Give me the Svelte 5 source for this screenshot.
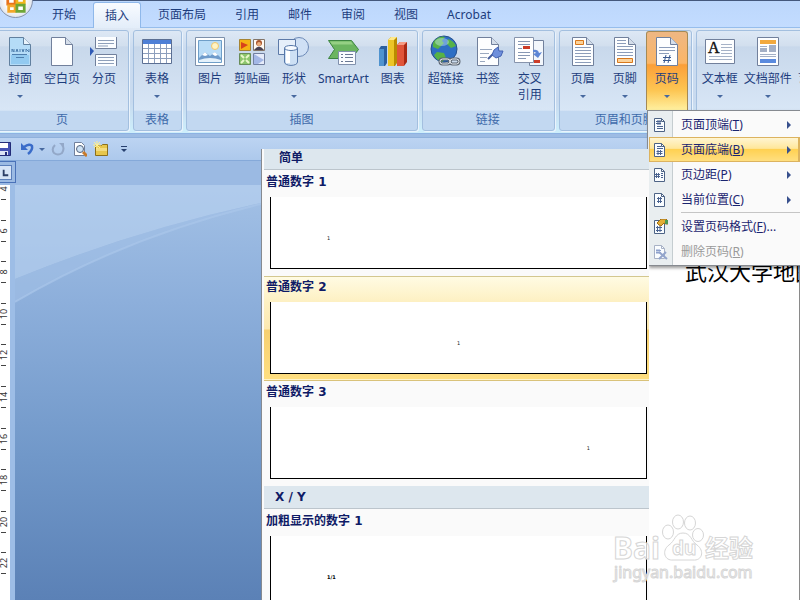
<script>
  const tabs = ['开始', '插入', '页面布局', '引用', '邮件', '审阅', '视图', 'Acrobat'];
  const groups = [
    { name: '页', items: [
      { label: ['封面'], icon: 'cover', drop: true },
      { label: ['空白页'], icon: 'blank' },
      { label: ['分页'], icon: 'break' }
    ] },
    { name: '表格', items: [{ label: ['表格'], icon: 'table', drop: true }] },
    { name: '插图', items: [
      { label: ['图片'], icon: 'picture' },
      { label: ['剪贴画'], icon: 'clipart' },
      { label: ['形状'], icon: 'shapes', drop: true },
      { label: ['SmartArt'], icon: 'smartart' },
      { label: ['图表'], icon: 'chart' }
    ] },
    { name: '链接', items: [
      { label: ['超链接'], icon: 'globe' },
      { label: ['书签'], icon: 'bookmark' },
      { label: ['交叉', '引用'], icon: 'xref' }
    ] },
    { name: '页眉和页脚', items: [
      { label: ['页眉'], icon: 'header', drop: true },
      { label: ['页脚'], icon: 'footer', drop: true },
      { label: ['页码'], icon: 'number', drop: true, open: true }
    ] },
    { name: '', wide: true, items: [
      { label: ['文本框'], icon: 'textbox', drop: true },
      { label: ['文档部件'], icon: 'parts', drop: true },
      { label: ['艺术字'], icon: 'none', drop: true }
    ] }
  ];
  const menu = [
    { text: '页面顶端', key: 'T', icon: 'top', sub: true },
    { text: '页面底端', key: 'B', icon: 'bottom', sub: true, on: true },
    { text: '页边距', key: 'P', icon: 'margin', sub: true },
    { text: '当前位置', key: 'C', icon: 'here', sub: true },
    { text: '设置页码格式', key: 'F', icon: 'format', tail: '...', sep: true },
    { text: '删除页码', key: 'R', icon: 'remove', off: true }
  ];
  const gallery = [
    { title: '简单', indent: true, items: [
      { name: '普通数字 1', align: 'left', mark: '1' },
      { name: '普通数字 2', align: 'center', mark: '1', on: true },
      { name: '普通数字 3', align: 'right', mark: '1' }
    ] },
    { title: 'X / Y', items: [{ name: '加粗显示的数字 1', align: 'left', mark: '1/1', bold: true }] }
  ];
  const marks = [4, 6, 8, 10, 12, 14, 16, 18, 20, 22].map((n, i) => ({ n, y: Math.round(4 + i * 41.6) }));
</script>

{#snippet sheet()}
  <path d="M5.500 2.500h14l7 7v21h-21z" fill="#fdfeff" stroke="#71809c" />
  <path d="M19.500 2.500v7h7" fill="#d5deea" stroke="#71809c" />
{/snippet}

{#snippet icon(name)}
  <svg class="icon" viewBox="0 0 32 32" aria-hidden="true">
    {#if name === 'cover'}
      <path d="M5.500 2.500h14l7 7v21h-21z" fill="#b5dcf7" stroke="#61809f" />
      <path d="M7 20h18v9H7z" fill="#93caf0" />
      <path d="M19.500 2.500v7h7" fill="#e9f3fb" stroke="#61809f" />
      <path d="M8 17v-3l2 3v-3m2 3l1-3 1 3m2-3v3m2-3l1 3 1-3m2 3v-3l3 3v-3M8 19.500h15M12 22.500h8" stroke="#4f7fae" fill="none" />
    {:else if name === 'blank'}
      {@render sheet()}
    {:else if name === 'break'}
      <path d="M7.500 2v11.500h21V2M7.500 31V19.500h21V31" fill="#fbfdff" stroke="#71809c" />
      <path d="M10 5.500h16M10 8.500h16M10 11h10M10 22.500h16M10 25.500h16M10 28.500h16" stroke="#8fa0ba" />
      <path d="M2 12l4 4-4 5z" fill="#2f5ab5" />
    {:else if name === 'table'}
      <path d="M1.500 4.500h29v24h-29z" fill="#fff" stroke="#5b6f93" />
      <path d="M2 5h28v4H2z" fill="#4d7fd6" />
      <path d="M2 13.500h28M2 18.500h28M2 23.500h28M7.500 9v19M13.500 9v19M19.500 9v19M25.500 9v19" stroke="#8d9fbd" />
    {:else if name === 'picture'}
      <path d="M1.500 2.500h29v28h-29z" fill="#fff" stroke="#7d90ab" />
      <path d="M4.500 5.500h23v22h-23z" fill="#b9dcf7" stroke="#6e9ec8" />
      <circle cx="21" cy="11" r="3.500" fill="#fff3c4" stroke="#efc66c" />
      <path d="M5 23l6-6 5 4 5-4 6 6v4H5z" fill="#6f9bcb" />
      <path d="M8 20l3-3 3 3-3 1zm10-1l3-2 3 3-3 1z" fill="#fff" />
      <path d="M5 25q11-4 22 0v2H5z" fill="#e4f1fb" />
    {:else if name === 'clipart'}
      <path d="M3.500 4.500h11v11h-11z" fill="#f6b414" stroke="#a68433" />
      <path d="M5 7l7 3-7 4z" fill="#d8431b" />
      <path d="M17.500 4.500h11v11h-11z" fill="#fffaf3" stroke="#827468" />
      <circle cx="23" cy="8" r="3" fill="#a7542d" /><path d="M18 15q5-7 10 0z" fill="#494253" /><circle cx="23" cy="9" r="2" fill="#edb07e" />
      <path d="M3.500 18.500h11v11h-11z" fill="#8cc56c" stroke="#688c59" />
      <path d="M5 20l3 3m5-3l-3 3m-5 5l3-3m5 3l-3-3" stroke="#e8f7c9" stroke-width="2" />
      <path d="M17.500 18.500h11v11h-11z" fill="#e6ecfa" stroke="#7280a0" />
      <path d="M18 19l10 6-6 4h-4z" fill="#a3b7e6" />
    {:else if name === 'shapes'}
      <circle cx="21" cy="12" r="9.500" fill="#cfe0f5" stroke="#6d8ab7" />
      <path d="M0.500 4.500h17v15h-17z" fill="#e6effa" stroke="#5d7aa8" />
      <path d="M6.500 13v14c0 4.500 13 4.500 13 0V13" fill="#cde0f5" stroke="#5778aa" />
      <path d="M8 15h4v13H8z" fill="#fff" />
      <ellipse cx="13" cy="13" rx="6.500" ry="2.500" fill="#f6faff" stroke="#5778aa" />
    {:else if name === 'smartart'}
      <path d="M1.500 5.500h23l7 9-7 9h-23l6-9z" fill="#6bb560" stroke="#3c8541" />
      <path d="M3 6.500h21l2 3H5z" fill="#95d084" />
      <path d="M11.500 16.500h17v13h-17z" fill="#fafcff" stroke="#8090ac" />
      <path d="M14 19.500h2M14 22.500h2M14 26.500h2M18 19.500h8M18 22.500h8M18 26.500h8" stroke="#6a7994" />
    {:else if name === 'chart'}
      <path d="M2 14l2-3h6v17l-2 3H2z" fill="#2b5f9f" /><path d="M2 14h5v17H2z" fill="#4f93cf" />
      <path d="M11 5l3-3h6v26l-2 3h-7z" fill="#b98c00" /><path d="M11 5h6v26h-6z" fill="#ecc527" /><path d="M11 5l3-3h6l-3 3z" fill="#ffe98a" />
      <path d="M20 10l3-3h7v20l-3 4h-7z" fill="#a92914" /><path d="M20 10h7v21h-7z" fill="#e0553a" /><path d="M20 10l3-3h7l-3 3z" fill="#f59b83" />
    {:else if name === 'globe'}
      <circle cx="14" cy="14" r="13" fill="#2e6fc4" stroke="#264f8b" />
      <path d="M5 5q5-5 10-3l-3 4 2 2-6 6-5-2q-1-4 2-7zM18 4q6 2 8 7l-5 2-4-4zM7 17l7 1 2 5-4 4q-6-2-8-7z" fill="#57b246" />
      <ellipse cx="12" cy="7" rx="7" ry="4" fill="#d5efff" opacity=".4" />
      <rect x="10" y="24" width="10" height="5" rx="2.500" fill="none" stroke="#5b6470" stroke-width="3" />
      <rect x="20" y="24" width="9" height="5" rx="2.500" fill="none" stroke="#5b6470" stroke-width="3" />
      <rect x="10" y="24" width="10" height="5" rx="2.500" fill="none" stroke="#eef2f6" />
      <rect x="20" y="24" width="9" height="5" rx="2.500" fill="none" stroke="#eef2f6" />
    {:else if name === 'bookmark'}
      {@render sheet()}
      <path d="M8 14.500h12M8 18.500h9M8 22.500h7M8 26.500h5" stroke="#9aa9c0" />
      <path d="M16 24l6-6" stroke="#445d9e" stroke-width="2" />
      <path d="M20 20l2-5 4-3 1 4h4l-2 5-5 2z" fill="#6e8fdc" stroke="#4463b3" />
    {:else if name === 'xref'}
      <path d="M15.500 5.500h14v25h-14z" fill="#f3f7fc" stroke="#71809c" />
      <path d="M0.500 2.500h19v25h-19z" fill="#fff" stroke="#8794ac" />
      <path d="M4 6.500h12M4 9.500h12M4 13.500h4M4 17.500h12M4 20.500h12M4 23.500h8" stroke="#8898b4" />
      <path d="M9 11h7v3H9zM20 25h6v3h-6z" fill="#cc3d2a" />
      <path d="M19 15q5-1 6 3l3-1-4 6-5-4 3-1q0-1-3-1z" fill="#5d86d6" />
    {:else if name === 'header'}
      {@render sheet()}
      <path d="M8.500 5.500h8v4h-8z" fill="#fbd29a" stroke="#d9781b" />
      <path d="M8 12.500h16M8 15.500h16M8 18.500h16M8 21.500h16M8 24.500h16M8 27.500h16" stroke="#8c9dba" />
    {:else if name === 'footer'}
      {@render sheet()}
      <path d="M8 5.500h9M8 8.500h9M8 11.500h16M8 14.500h16M8 17.500h16M8 20.500h16" stroke="#8c9dba" />
      <path d="M8.500 23.500h15v4h-15z" fill="#fbd29a" stroke="#d9781b" />
    {:else if name === 'number'}
      {@render sheet()}
      <path d="M8 12.500h16M8 15.500h16M8 18.500h10" stroke="#8c9dba" />
      <path d="M15 20l-2 8M19 20l-2 8M12 22.500h8M12 25.500h8" stroke="#38588f" />
    {:else if name === 'textbox'}
      <path d="M1.500 4.500h29v24h-29z" fill="#fdfeff" stroke="#71809c" />
      <path d="M17 9.500h11M17 12.500h11M17 15.500h11M17 18.500h11M5 21.500h23M5 24.500h23" stroke="#a5b2c7" />
      <text x="4" y="18" font-family="Liberation Serif, serif" font-size="16" fill="#111" stroke="#111" stroke-width=".4">A</text>
    {:else if name === 'parts'}
      <path d="M5.500 2.500h21v28h-21z" fill="#fdfeff" stroke="#71809c" />
      <path d="M8 5h16v4H8z" fill="#f2a93e" />
      <path d="M8 13h7v4H8zM17 10h7v7h-7z" fill="#a4b0c6" />
      <path d="M8 11.500h7M8 19.500h16M8 21.500h16" stroke="#a4b0c6" />
      <path d="M8 24h16v4H8z" fill="#5a8ade" />
    {/if}
  </svg>
{/snippet}

{#snippet menuIcon(name)}
  <svg class="micon" viewBox="0 0 16 16" aria-hidden="true">
    <path d="M2.500 1.500h7l3 3v10h-10z" fill="#fafdff" stroke={name === 'remove' ? '#a8b2c6' : '#4d6385'} />
    <path d="M9.500 1.500v3h3" fill="none" stroke={name === 'remove' ? '#a8b2c6' : '#4d6385'} />
    {#if name === 'top'}
      <path d="M6 3v5M8 3v5M4 4.500h5M4 6.500h5M5 9.500h6M5 11.500h6" stroke="#4a6390" />
    {:else if name === 'bottom'}
      <path d="M6 8v5M8.500 8v5M4.500 9.500h6M4.500 11.500h6M5 4.500h4M5 6.500h6" stroke="#4a6390" />
    {:else if name === 'margin'}
      <path d="M4.500 6v5M6.500 6v5M3 7.500h5M3 9.500h5M9 6.500h2M9 8.500h2M9 10.500h2" stroke="#4a6390" />
    {:else if name === 'here'}
      <path d="M6.500 5v6M8.500 5v6M5 6.500h5M5 9.500h5" stroke="#4a6390" />
    {:else if name === 'format'}
      <path d="M5.500 7v6M8 7v6M4 8.500h6M4 11.500h6" stroke="#4a6390" />
      <path d="M5 4l4-4h5l2 2v3h-2l-2-1-3 3-2-1z" fill="#e3ae36" stroke="#a06d13" />
      <path d="M13 1h3v4h-3z" fill="#4e9a53" />
    {:else}
      <path d="M5 5v5M7 5v5M4 6.500h5M4 8.500h5" stroke="#8ca0cc" />
      <path d="M7 8l8 7M14 8l-7 7" stroke="#93a5cc" stroke-width="2" />
    {/if}
  </svg>
{/snippet}

<div class="app">
  <nav class="tabs">
    {#each tabs as t, i}
      <button class="tab" class:active={i === 1}>{t}</button>
    {/each}
    <button class="office" aria-label="Office">
      <svg viewBox="0 0 24 24" aria-hidden="true">
        <path d="M3 4h8v7H3z" fill="#fff" stroke="#e8731d" stroke-width="3" />
        <path d="M13 2h8v8h-8z" fill="#fff" stroke="#f1b51c" stroke-width="3" />
        <path d="M4 13h7v6H4z" fill="#fff" stroke="#f3a72a" stroke-width="3" />
        <path d="M13 12h8v7h-8z" fill="#fff" stroke="#6ea636" stroke-width="3" />
      </svg>
    </button>
  </nav>

  <div class="ribbon">
    {#each groups as g}
      <section class="group" class:wide={g.wide}>
        <div class="tools">
          {#each g.items as it}
            <button class="tool" class:open={it.open}>
              {@render icon(it.icon)}
              {#each it.label as line}<span>{line}</span>{/each}
              {#if it.drop}<i class="down"></i>{/if}
            </button>
          {/each}
        </div>
        <h2>{g.name}</h2>
      </section>
    {/each}
  </div>

  <div class="quick">
    <button class="save" aria-label="保存">
      <svg viewBox="0 0 16 16"><path d="M1.500 1.500h13v13h-13z" fill="#4451b2" stroke="#232c78" /><path d="M4 2h8v5H4z" fill="#fff" /><path d="M4 10h8v4H4z" fill="#dce4f5" /><path d="M9 11h2v3H9z" fill="#232c78" /></svg>
    </button>
    <button aria-label="撤消">
      <svg viewBox="0 0 16 16"><path d="M3 6q6-4 8-1 1 4-4 8" fill="none" stroke="#3a6cc9" stroke-width="2.500" /><path d="M0 2v7h7z" fill="#3a6cc9" /></svg>
    </button>
    <i class="down"></i>
    <button aria-label="重复">
      <svg viewBox="0 0 16 16"><path d="M5 4q-4 4-1 8 4 3 8 0 3-5 0-8" fill="none" stroke="#93a8c8" stroke-width="2" /><path d="M9 2h5v5z" fill="#93a8c8" /></svg>
    </button>
    <button aria-label="打印预览">
      <svg viewBox="0 0 16 16"><path d="M3.500 1.500h7l3 3v10h-10z" fill="#fff" stroke="#71809c" /><circle cx="9" cy="8" r="3.500" fill="#cfe3f5" stroke="#52627d" /><path d="M12 11l4 4" stroke="#c77a2b" stroke-width="3" /></svg>
    </button>
    <button aria-label="打开">
      <svg viewBox="0 0 16 16"><path d="M3.500 4.500h6l1-1h5v11h-12z" fill="#e7c64b" stroke="#8b6f1b" /><path d="M4 7h11v3H4z" fill="#f3dc80" /><path d="M5 0v8M1 4h8M2 1l6 6M8 1L2 7" stroke="#ffef8f" /></svg>
    </button>
    <button class="more" aria-label="自定义快速访问工具栏"><i class="down"></i></button>
  </div>

  <div class="rulerbar">
    <button class="corner" aria-label="制表符"><svg viewBox="0 0 12 14"><path d="M4 4v6h5" fill="none" stroke="#2a3d66" stroke-width="2" /></svg></button>
  </div>

  <main class="work">
    <div class="ruler">
      <svg width="10" height="440">
        {#each marks as m}
          <text transform="translate(7 {m.y}) rotate(-90)" text-anchor="middle" font-size="9" fill="#333">{m.n}</text>
          <path d="M1 {m.y - 10.5}h5M1 {m.y + 10.5}h5" stroke="#444" />
        {/each}
      </svg>
    </div>
    <div class="desk">
      <svg class="swoosh" viewBox="0 0 246 120" aria-hidden="true">
        <path d="M0 0H246V18Q120 45 0 94z" fill="#b9d2f0" opacity=".6" />
        <path d="M0 94Q120 45 246 18V19Q110 52 0 117z" fill="#a2c0e6" opacity=".6" />
        <path d="M0 117Q110 52 246 19" fill="none" stroke="#a9c6ea" stroke-width="2" opacity=".7" />
      </svg>
      <article class="page"><p>武汉大学地图</p></article>
    </div>
  </main>

  <div class="menu" role="menu">
    {#each menu as m}
      {#if m.sep}<hr />{/if}
      <button class="row" class:on={m.on} disabled={m.off} role="menuitem">
        <span class="slot">{@render menuIcon(m.icon)}</span>
        <span class="text">{m.text}(<u>{m.key}</u>){m.tail ?? ''}</span>
        {#if m.sub}<i class="right"></i>{/if}
      </button>
    {/each}
  </div>

  <div class="gallery">
    <div class="scroll">
      {#each gallery as s}
        <h3 class:indent={s.indent}>{s.title}</h3>
        {#each s.items as it}
          <button class="choice" class:on={it.on}>
            <span class="name">{it.name}</span>
            <span class="preview {it.align}" class:bold={it.bold}>{it.mark}</span>
          </button>
        {/each}
      {/each}
    </div>
  </div>

  <svg class="brand" viewBox="0 0 150 74" aria-hidden="true">
    <g fill="#fff" fill-opacity=".8" stroke="#d6d6d6">
      <ellipse cx="58" cy="20" rx="5.500" ry="7" /><ellipse cx="68" cy="10" rx="5.500" ry="7" />
      <ellipse cx="80" cy="11" rx="5.500" ry="7" /><ellipse cx="88" cy="23" rx="5.500" ry="6.500" />
      <path d="M73 21c-8 0-8 8-14 12-8 6-4 16 4 15h20c9 1 12-9 4-15-6-4-6-12-14-12z" />
      <text x="3" y="47" font-size="30" font-weight="700">Bai</text>
      <text x="62" y="43" font-size="19" font-weight="700">du</text>
      <text x="95" y="45" font-size="24" font-weight="700">经验</text>
      <text x="4" y="66" font-size="16">jingyan.baidu.com</text>
    </g>
  </svg>
</div>

<style>
  :global(body) { margin: 0; }
  .app {
    position: relative; display: flex; flex-direction: column;
    height: 100vh; overflow: hidden;
    font: 12px/16px "Noto Sans", "Noto Sans CJK SC", sans-serif;
    color: #1d3d7d; background: #9dbce4;
  }
  button { margin: 0; padding: 0; border: 0; background: none; font: inherit; color: inherit; }
  h2, h3, p { margin: 0; font: inherit; }
  .tabs {
    position: relative; display: flex; gap: 5px; height: 26px; flex: none;
    padding-left: 40px; border-top: 1px solid #44587c;
    background: linear-gradient(#bcd7fc, #c3dcff);
  }
  .tab { padding: 2px 12px 0; height: 26px; border-radius: 3px 3px 0 0; white-space: nowrap; }
  .tab.active {
    border: 1px solid #8fb8ea; border-bottom: 0; padding: 1px 11px 0; margin-top: 1px;
    background: linear-gradient(#f8fbff, #e3edf9); z-index: 1;
  }
  .office {
    position: absolute; left: -2px; top: -18px; width: 35px; height: 35px;
    border-radius: 50%; border: 1px solid #8592ab;
    background: radial-gradient(#fff 40%, #c5cedd);
  }
  .office svg { width: 22px; height: 22px; display: block; margin: 9px 0 0 6px; }
  .ribbon {
    display: flex; gap: 4px; flex: none; height: 101px; padding: 2px 0 2px; margin-left: -4px;
    border-top: 1px solid #96bdec; border-bottom: 1px solid #8db2e3;
    background: linear-gradient(#dfe9f5, #cbdcf0 20%, #c8daef 70%, #cdeefb 98%);
  }
  .group {
    display: flex; flex-direction: column; flex: none; box-sizing: border-box;
    padding: 0 3px 0 2px; border: 1px solid #a3bfdf; border-radius: 3px;
    background: linear-gradient(#dde8f5, #d2dfee 15%, #c8d8eb 16%, #d8e6f6 80%, #c2d8f1 81%);
    box-shadow: 1px 1px 0 #eaf3fc;
  }
  .group.wide { width: 200px; }
  .tools { display: flex; height: 79px; }
  .tool {
    display: flex; flex-direction: column; align-items: center; flex: none; box-sizing: border-box;
    min-width: 42px; padding: 4px 3px 0; height: 79px; white-space: nowrap;
  }
  .tool.open {
    border: 1px solid #a58a55; border-bottom: 0; padding: 3px 2px 0; border-radius: 3px 3px 0 0;
    background: linear-gradient(#eeb783, #fbb667 40%, #fb9f38 42%, #fdc653 75%, #fff0a0);
  }
  .icon { width: 32px; height: 32px; margin-bottom: 4px; flex: none; }
  .down {
    width: 0; height: 0; border: 3px solid transparent; border-top-color: #47699f; border-bottom: 0; flex: none;
  }
  .tool .down { margin-top: 8px; }
  .group h2 { text-align: center; line-height: 19px; color: #3e6aaa; white-space: nowrap; }
  .quick {
    display: flex; align-items: center; gap: 5px; height: 22px; flex: none; margin-top: 3px;
    margin-left: -4px; border-top: 1px solid #8fb1dc; border-bottom: 1px solid #85a9d9;
    background: linear-gradient(#bcd4f2, #adc9ec);
  }
  .quick button { width: 16px; height: 16px; }
  .quick .save { margin-right: 4px; }
  .quick svg { display: block; width: 16px; height: 16px; }
  .quick > .down { margin-left: -3px; }
  .quick .more { display: flex; flex-direction: column; align-items: center; justify-content: center; gap: 2px; width: 12px; margin-left: 5px; }
  .quick .more::before { content: ""; width: 6px; height: 1px; background: #27406f; }
  .more .down { border-top-color: #27406f; }
  .rulerbar { height: 24px; flex: none; background: #9bbae3; }
  .corner { width: 16px; height: 22px; border: 1px solid #4a72b8; border-left: 0; display: flex; align-items: center; box-sizing: border-box; }
  .corner svg { width: 11px; height: 13px; background: #d6e4f7; border: 1px solid #5b7fba; border-left: 0; }
  .work { display: flex; flex: 1; min-height: 0; }
  .ruler { width: 10px; flex: none; background: #fff; border-right: 5px solid #9dbde6; overflow: hidden; }
  .ruler svg { display: block; }
  .desk {
    position: relative; display: flex; flex: 1; min-width: 0;
    background: linear-gradient(#a3c1e6, #8dafdb 28%, #7198c9 65%, #5b81b6);
  }
  .swoosh { position: absolute; left: 0; top: 0; width: 246px; height: 120px; }
  .page {
    flex: 1; min-width: 0; overflow: hidden; margin-left: 247px; padding: 71px 0 0 423px;
    background: #fff; border-right: 1px solid #8a8a8a; color: #000;
  }
  .page p { font-size: 22px; line-height: 30px; white-space: nowrap; }
  .menu {
    position: absolute; left: 647px; right: 0; top: 110px; padding: 1px 0 1px 1px;
    border: 1px solid #868a90; border-right: 0; background: linear-gradient(90deg, #e9eef0 24px, #c5cdd0 24px, #c5cdd0 25px, #fafafa 25px);
    box-shadow: 2px 2px 3px #0006; color: #1a2470;
  }
  .row { display: flex; align-items: center; width: 100%; height: 25px; text-align: left; white-space: nowrap; }
  .row.on {
    box-sizing: border-box; height: 25px; border: 1px solid #dcb35f; border-right-width: 2px;
    background: linear-gradient(#fff5d2, #ffe79b 45%, #ffd152 50%, #ffdf80);
  }
  .row:disabled { color: #9a9a9a; }
  .slot { width: 32px; padding-left: 3px; box-sizing: border-box; display: flex; }
  .row.on .slot { width: 31px; padding-left: 2px; }
  .micon { width: 16px; height: 16px; }
  .text { flex: 1; }
  .right { border: 4px solid transparent; border-left: 4px solid #38508d; border-right: 0; margin-right: 9px; }
  .row.on .right { margin-right: 7px; }
  .menu hr { margin: 0 0 1px 32px; border: 0; height: 1px; background: #c5c5c5; }
  .gallery {
    position: absolute; left: 261px; top: 149px; bottom: 0; width: 385px; overflow: hidden;
    padding-left: 2px; border-left: 1px solid #868a90; background: #fafafa; color: #0f1b66;
    font-family: "DejaVu Sans", "Noto Sans CJK SC", sans-serif; font-weight: 700;
  }
  .scroll { margin-top: -2px; }
  h3 { height: 22px; line-height: 22px; padding-left: 11px; margin-bottom: 1px; background: #dde7ee; border-bottom: 1px solid #bcc5cc; font-weight: 700; }
  h3.indent { padding-left: 15px; }
  .choice {
    display: flex; flex-direction: column; box-sizing: border-box; width: 100%; height: 105px;
    padding: 1px 2px 7px; border-top: 1px solid transparent; text-align: left;
  }
  .choice.on {
    border-top-color: #d3c78f; box-shadow: inset 0 -1px #d9c27a, inset 0 -2px #fff3c8;
    background: linear-gradient(#fffbe3, #fdf0c2 24%, #fce8b0 50%, #f6cf71 51%, #ffdf80);
  }
  .name { line-height: 18px; height: 24px; }
  .preview {
    flex: 1; margin-left: 4px; padding: 37px 56px 0; background: #fff; border: 1px solid #000; border-top: 0;
    font-size: 5px; line-height: 8px; color: #222; font-weight: 400;
  }
  .preview.center { text-align: center; }
  .preview.right { text-align: right; border-left: 1px solid #000; border-right: 1px solid #000; margin-right: 0; }
  .preview.bold { font-weight: 700; color: #000; }
  .brand { position: absolute; right: 40px; bottom: 14px; width: 150px; height: 74px; font-family: "Noto Sans", "Noto Sans CJK SC", sans-serif; }
</style>
